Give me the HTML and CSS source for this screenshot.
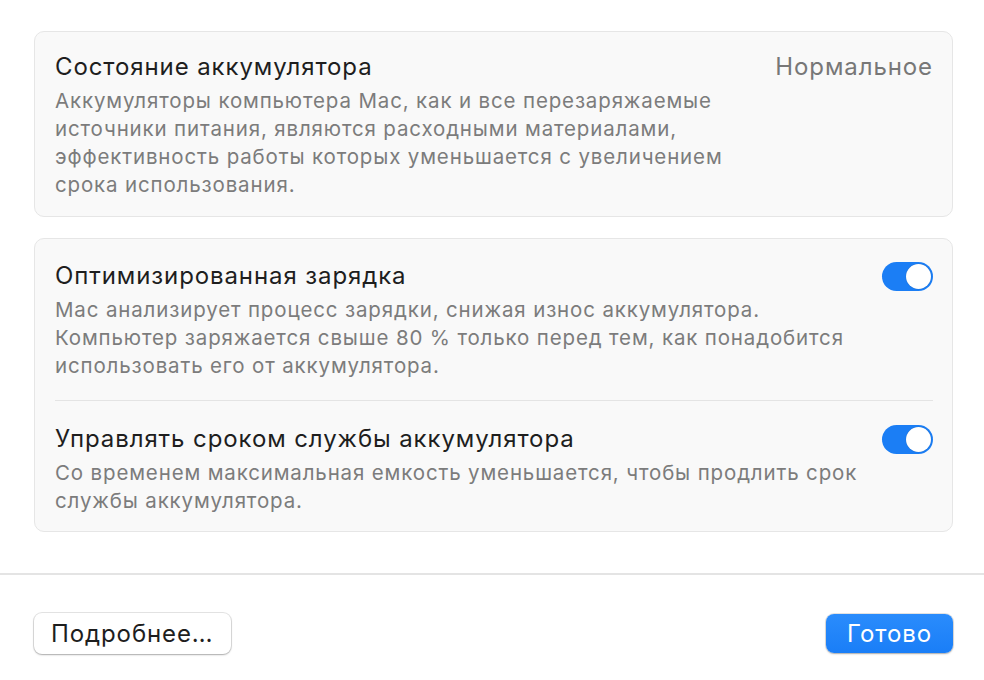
FILE: index.html
```html
<!DOCTYPE html>
<html lang="ru">
<head>
<meta charset="utf-8">
<link rel="stylesheet" href="styles.css">
</head>
<body>
<div class="content">
  <section class="card">
    <div class="row">
      <div class="text">
        <div class="title">Состояние аккумулятора</div>
        <div class="desc">Аккумуляторы компьютера Mac, как и все перезаряжаемые<br>источники питания, являются расходными материалами,<br>эффективность работы которых уменьшается с увеличением<br>срока использования.</div>
      </div>
      <div class="value">Нормальное</div>
    </div>
  </section>
  <section class="card card2">
    <div class="row">
      <div class="text">
        <div class="title">Оптимизированная зарядка</div>
        <div class="desc">Mac анализирует процесс зарядки, снижая износ аккумулятора.<br>Компьютер заряжается свыше 80&nbsp;% только перед тем, как понадобится<br>использовать его от аккумулятора.</div>
      </div>
      <div class="toggle"><span class="knob"></span></div>
    </div>
    <div class="sep"></div>
    <div class="row">
      <div class="text">
        <div class="title">Управлять сроком службы аккумулятора</div>
        <div class="desc">Со временем максимальная емкость уменьшается, чтобы продлить срок<br>службы аккумулятора.</div>
      </div>
      <div class="toggle"><span class="knob"></span></div>
    </div>
  </section>
</div>
<footer class="footer">
  <button class="btn">Подробнее…</button>
  <button class="btn primary">Готово</button>
</footer>
</body>
</html>
```
FILE: styles.css
```css
* { box-sizing: border-box; }
html, body { margin: 0; padding: 0; background: #fff; }
body {
  width: 984px;
  height: 680px;
  overflow: hidden;
  font-family: Inter, "Noto Sans", "Liberation Sans", sans-serif;
  color: #1e1e1e;
}
.content {
  padding: 31px 31px 0 34px;
  display: flex;
  flex-direction: column;
  gap: 21px;
}
.card {
  background: #f9f9f9;
  border: 1px solid #e6e6e6;
  border-radius: 10px;
  padding: 21px 19px 17px 20px;
}
.card2 { padding-top: 23px; padding-bottom: 16px; }
.row {
  display: flex;
  justify-content: space-between;
  align-items: flex-start;
}
.title {
  font-size: 24px;
  line-height: 28px;
  letter-spacing: 0.9px;
  color: #1e1e1e;
}
.desc {
  margin-top: 6px;
  font-size: 20.5px;
  line-height: 28px;
  letter-spacing: 0.85px;
  color: #7c7c7c;
}
.value {
  font-size: 24px;
  line-height: 28px;
  letter-spacing: 0.9px;
  color: #777;
}
.sep {
  height: 1px;
  background: #e4e4e4;
  margin: 20px 0 24px;
}
.toggle {
  width: 51px;
  height: 29px;
  border-radius: 15px;
  background: #1b7ef5;
  position: relative;
  flex: none;
}
.knob {
  position: absolute;
  right: 2px;
  top: 2px;
  width: 25px;
  height: 25px;
  border-radius: 50%;
  background: #fff;
  box-shadow: 0 0 1px rgba(0,0,0,0.3);
}
.footer {
  margin-top: 41px;
  border-top: 2px solid #e4e4e4;
  padding: 38px 31px 0 34px;
  display: flex;
  justify-content: space-between;
}
.btn {
  font-family: inherit;
  font-size: 24px;
  letter-spacing: 0.9px;
  height: 41px;
  padding: 0 17px;
  border-radius: 8px;
  border: none;
  background: #fff;
  color: #1e1e1e;
  box-shadow: 0 0 0 1px rgba(0,0,0,0.1), 0 1px 2px rgba(0,0,0,0.25);
}
.btn.primary {
  background: linear-gradient(#2a8cfc, #1a7ef7);
  color: #fff;
  padding: 0 21px;
  height: 39px;
  margin-top: 1px;
}
```
